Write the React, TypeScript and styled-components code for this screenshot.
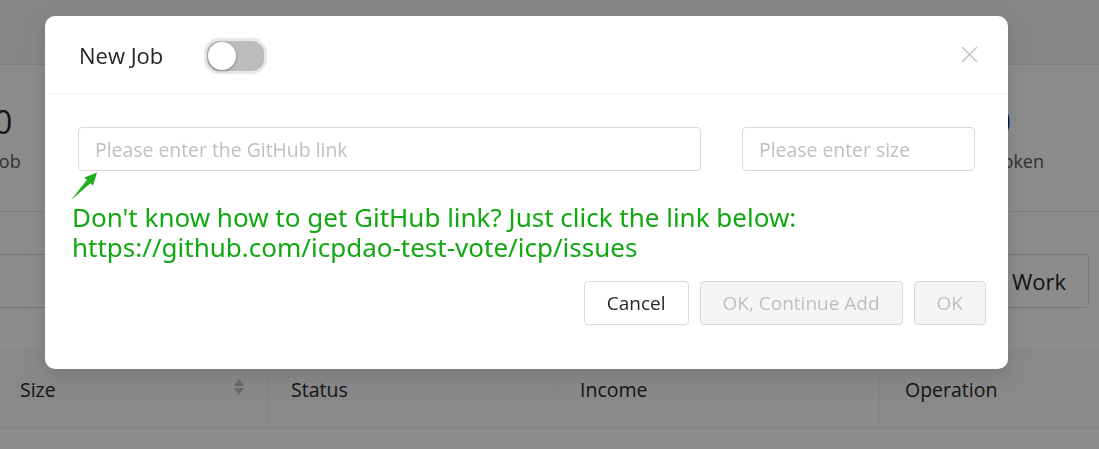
import React from "react";
import styled, { createGlobalStyle } from "styled-components";

const GlobalStyle = createGlobalStyle`
  html, body {
    margin: 0;
    padding: 0;
    background: #fff;
    font-family: "Open Sans", "Noto Sans", sans-serif;
    overflow: hidden;
  }
`;

const Page = styled.div`
  width: 1099px;
  height: 449px;
  overflow: hidden;
  background: #fff;
`;

const TopBar = styled.div`
  height: 64px;
  background: #f5f5f5;
  border-bottom: 1px solid #e8e8e8;
`;

const StatsRow = styled.div`
  height: 146px;
  display: flex;
  justify-content: space-between;
  align-items: center;
  border-bottom: 1px solid #e8e8e8;
  margin-left: -6px;
  padding-right: 55px;
`;

const Stat = styled.div`
  display: flex;
  flex-direction: column;
  align-items: flex-start;
  gap: 8px;
`;

const StatValue = styled.div<{ $color: string }>`
  font-size: 32px;
  line-height: 38px;
  color: ${(p) => p.$color};
`;

const StatLabel = styled.div`
  font-size: 18px;
  color: #595959;
`;

const ToolRow = styled.div`
  height: 54px;
  margin-top: 42px;
  display: flex;
  justify-content: space-between;
  margin-left: -300px;
  margin-right: 10px;
`;

const SearchBox = styled.div`
  width: 420px;
  border: 1px solid #d9d9d9;
  border-radius: 4px;
`;

const WorkButton = styled.div`
  width: 200px;
  border: 1px solid #d9d9d9;
  border-radius: 4px;
  display: flex;
  align-items: center;
  justify-content: flex-end;
  padding-right: 22px;
  font-size: 22px;
  color: #262626;
  box-sizing: border-box;
`;

const TableHead = styled.div`
  margin-top: 42px;
  height: 78px;
  display: grid;
  grid-template-columns: 269px 289px 322px 1fr;
  background: #fafafa;
  border-bottom: 1px solid #eee;
`;

const HeadCell = styled.div<{ $last?: boolean }>`
  display: flex;
  align-items: center;
  justify-content: space-between;
  padding: 0 24px 0 20px;
  font-size: 19.5px;
  color: #262626;
  border-right: ${(p) => (p.$last ? "none" : "1px solid #f0f0f0")};
  & + & {
    padding-left: 22px;
  }
  &:nth-child(3) {
    padding-left: 23px;
  }
  &:last-child {
    padding-left: 25px;
  }
`;

const SortIcon = styled.span`
  display: flex;
  flex-direction: column;
  gap: 2px;
  margin-top: -4px;
`;

const Overlay = styled.div`
  position: fixed;
  inset: 0;
  background: rgba(0, 0, 0, 0.45);
`;

const Modal = styled.div`
  position: fixed;
  top: 16px;
  left: 45px;
  width: 963px;
  background: #fff;
  border-radius: 10px;
  box-shadow: 0 6px 16px rgba(0, 0, 0, 0.08), 0 9px 28px 8px rgba(0, 0, 0, 0.05);
`;

const ModalHeader = styled.div`
  height: 77px;
  display: flex;
  align-items: center;
  padding: 0 30px 0 34px;
  border-bottom: 1px solid #f0f0f0;
`;

const Title = styled.div`
  font-size: 22px;
  color: #262626;
  margin-right: 41px;
`;

const SwitchTrack = styled.div`
  width: 57px;
  height: 30px;
  border-radius: 15px;
  background: #bdbdbd;
  border: 3px solid #e8e8e8;
  position: relative;
  box-sizing: content-box;
  margin-top: 2px;
`;

const SwitchThumb = styled.div`
  position: absolute;
  left: 1px;
  top: 1px;
  width: 28px;
  height: 28px;
  border-radius: 50%;
  background: #fff;
  box-shadow: 0 1px 3px rgba(0, 0, 0, 0.35);
`;

const Close = styled.button`
  margin-left: auto;
  border: none;
  background: none;
  padding: 0;
  display: flex;
  cursor: pointer;
`;

const ModalBody = styled.div`
  padding: 33px 33px 44px 33px;
`;

const InputRow = styled.div`
  display: flex;
  gap: 41px;
`;

const Input = styled.input<{ $width: number }>`
  width: ${(p) => p.$width}px;
  height: 44px;
  box-sizing: border-box;
  border: 1px solid #d9d9d9;
  border-radius: 4px;
  padding: 0 16px;
  font-family: "Open Sans", "Noto Sans", sans-serif;
  font-size: 19.4px;
  color: #262626;
  outline: none;
  &::placeholder {
    color: #bfbfbf;
  }
`;

const Hint = styled.div`
  margin-left: -6px;
  color: #12a812;
  font-family: "Noto Sans", "Open Sans", sans-serif;
  font-size: 26px;
  line-height: 30px;
`;

const ArrowWrap = styled.div`
  height: 31px;
  display: flex;
  margin-left: -8px;
`;

const Footer = styled.div`
  margin-top: 19px;
  margin-right: -11px;
  display: flex;
  justify-content: flex-end;
  gap: 11px;
`;

const Button = styled.button<{ $disabled?: boolean }>`
  height: 44px;
  padding: 0 22px;
  border-radius: 4px;
  border: 1px solid #d9d9d9;
  font-family: "Open Sans", "Noto Sans", sans-serif;
  font-size: 19px;
  background: ${(p) => (p.$disabled ? "#f5f5f5" : "#fff")};
  color: ${(p) => (p.$disabled ? "#bfbfbf" : "#262626")};
  box-shadow: ${(p) => (p.$disabled ? "none" : "0 2px 0 rgba(0,0,0,0.015)")};
`;

export default function App() {
  return (
    <>
      <GlobalStyle />
      <Page>
        <TopBar />
        <StatsRow>
          <Stat>
            <StatValue $color="#262626">0</StatValue>
            <StatLabel>Job</StatLabel>
          </Stat>
          <Stat>
            <StatValue $color="#1a2a80">0</StatValue>
            <StatLabel>Token</StatLabel>
          </Stat>
        </StatsRow>
        <ToolRow>
          <SearchBox />
          <WorkButton>Work</WorkButton>
        </ToolRow>
        <TableHead>
          <HeadCell>
            Size
            <SortIcon>
              <svg width="10" height="7" viewBox="0 0 10 7">
                <path d="M5 0 L10 7 L0 7 Z" fill="#bfbfbf" />
              </svg>
              <svg width="10" height="7" viewBox="0 0 10 7">
                <path d="M0 0 L10 0 L5 7 Z" fill="#bfbfbf" />
              </svg>
            </SortIcon>
          </HeadCell>
          <HeadCell>Status</HeadCell>
          <HeadCell>Income</HeadCell>
          <HeadCell $last>Operation</HeadCell>
        </TableHead>
      </Page>
      <Overlay />
      <Modal>
        <ModalHeader>
          <Title>New Job</Title>
          <SwitchTrack>
            <SwitchThumb />
          </SwitchTrack>
          <Close aria-label="close">
            <svg width="17" height="17" viewBox="0 0 17 17">
              <path d="M1 1 L16 16 M16 1 L1 16" stroke="#c8c8c8" strokeWidth="1.6" fill="none" />
            </svg>
          </Close>
        </ModalHeader>
        <ModalBody>
          <InputRow>
            <Input $width={623} placeholder="Please enter the GitHub link" />
            <Input $width={233} placeholder="Please enter size" />
          </InputRow>
          <ArrowWrap>
            <svg width="30" height="30" viewBox="0 0 30 30">
              <path d="M1 29 L16.9 8.9 L14.4 6.5 L27 1.5 L23 14.7 L20.5 12.3 Z" fill="#1fae1f" />
            </svg>
          </ArrowWrap>
          <Hint>
            Don't know how to get GitHub link? Just click the link below:
            <br />
            https://github.com/icpdao-test-vote/icp/issues
          </Hint>
          <Footer>
            <Button>Cancel</Button>
            <Button $disabled>OK, Continue Add</Button>
            <Button $disabled>OK</Button>
          </Footer>
        </ModalBody>
      </Modal>
    </>
  );
}
